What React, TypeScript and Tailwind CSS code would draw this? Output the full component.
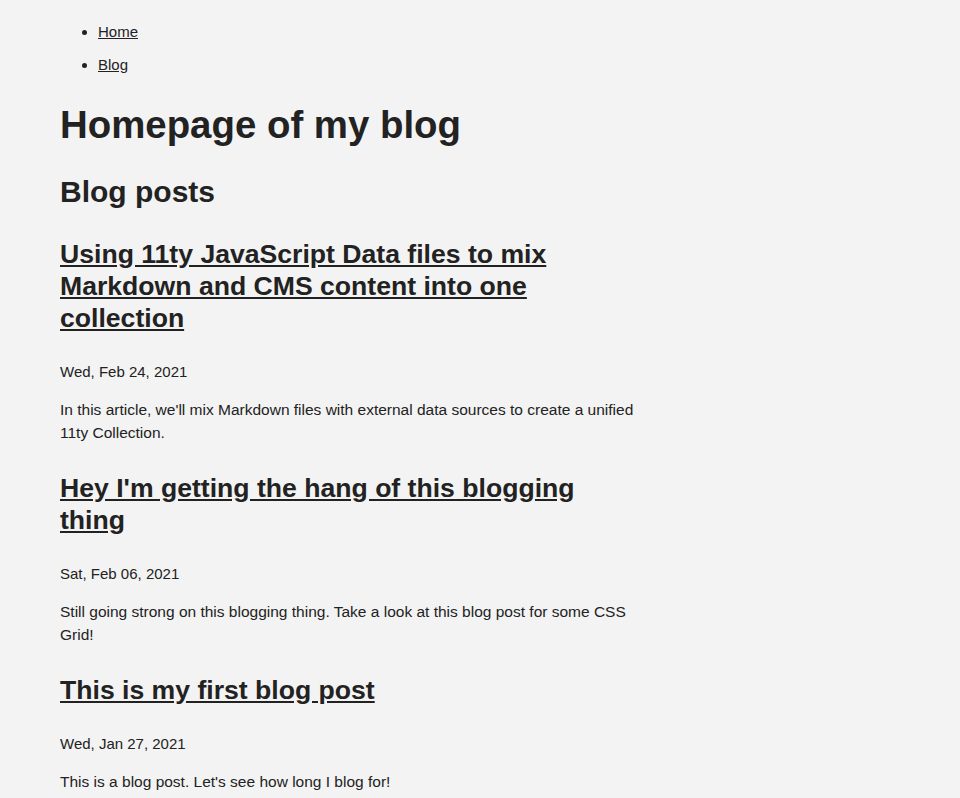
const posts = [
  {
    title: "Using 11ty JavaScript Data files to mix Markdown and CMS content into one collection",
    date: "Wed, Feb 24, 2021",
    summary: "In this article, we'll mix Markdown files with external data sources to create a unified 11ty Collection.",
  },
  {
    title: "Hey I'm getting the hang of this blogging thing",
    date: "Sat, Feb 06, 2021",
    summary: "Still going strong on this blogging thing. Take a look at this blog post for some CSS Grid!",
  },
  {
    title: "This is my first blog post",
    date: "Wed, Jan 27, 2021",
    summary: "This is a blog post. Let's see how long I blog for!",
  },
];

export default function App() {
  return (
    <div className="min-h-[798px] bg-[#f3f3f3] text-[#222] font-['Liberation_Sans',Arial,sans-serif] px-[60px] pb-6">
      {/* Nav */}
      <nav>
        <ul className="list-disc pl-[38px] pt-[20px] flex flex-col gap-[9px] text-[15px] leading-[24px]">
          <li>
            <a href="#" className="underline">Home</a>
          </li>
          <li>
            <a href="#" className="underline">Blog</a>
          </li>
        </ul>
      </nav>

      <main className="max-w-[580px]">
        <h1 className="mt-[25px] text-[38.4px] leading-[46px] font-bold">Homepage of my blog</h1>
        <h2 className="mt-[26px] text-[30px] leading-[36px] font-bold">Blog posts</h2>

        {posts.map((post) => (
          <article key={post.date}>
            <h3 className="mt-[28px] text-[26.6px] leading-[32px] font-bold">
              <a href="#" className="underline">{post.title}</a>
            </h3>
            <p className="mt-[26px] text-[15px] leading-[24px]">{post.date}</p>
            <p className="mt-[14px] text-[15.5px] leading-[23px]">{post.summary}</p>
          </article>
        ))}
      </main>
    </div>
  );
}
